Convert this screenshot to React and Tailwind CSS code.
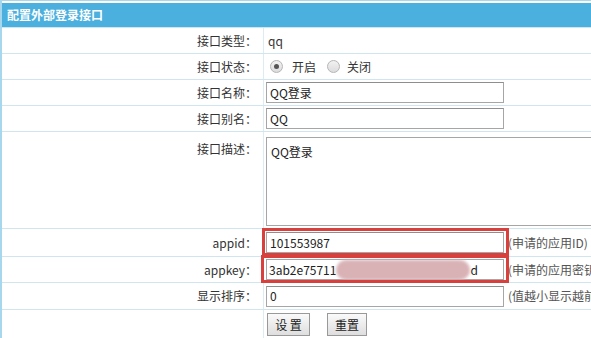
import React from "react";

const font = { fontFamily: '"Noto Sans CJK SC", "Noto Sans", sans-serif' };

function Row({ label, children, h = "h-[26px]", top = false }) {
  return (
    <div className={`flex border-b border-[#cfe5ef] ${h}`}>
      <div
        className={`w-[262px] shrink-0 border-r border-[#dcecf3] pr-[6px] text-right text-[12px] text-[#333] ${
          top ? "pt-[8px]" : "flex items-center justify-end"
        }`}
      >
        {label}
      </div>
      <div className="flex flex-1 items-center pl-[2px] text-[12px] text-[#333]">{children}</div>
    </div>
  );
}

function Input({ value, w = "w-[238px]" }) {
  return (
    <div
      className={`${w} h-[21px] border border-[#a6a6a6] border-t-[#8e8e8e] bg-white pl-[3px] flex items-center text-[12px] text-[#222]`}
    >
      {value}
    </div>
  );
}

function Radio({ checked }) {
  return (
    <span className="inline-flex h-[13px] w-[13px] items-center justify-center rounded-full border border-[#b5b5b5] bg-gradient-to-b from-[#f2f2f2] to-[#dcdcdc]">
      {checked && <span className="h-[5px] w-[5px] rounded-full bg-[#555]" />}
    </span>
  );
}

export default function App() {
  return (
    <div className="h-[338px] w-[591px] overflow-hidden bg-white" style={font}>
      <div className="w-[720px] border-l-2 border-t border-[#a6d7ec] pt-[2px]">
        <div className="flex h-[25px] items-center bg-[#4cb0de] pl-[5px] text-[12px] font-bold text-white border-b border-[#cfe5ef]">
          配置外部登录接口
        </div>
        <Row label="接口类型：">
          <span className="pl-[2px]">qq</span>
        </Row>
        <Row label="接口状态：">
          <span className="ml-[4px] flex items-center gap-[9px]">
            <Radio checked />
            <span>开启</span>
          </span>
          <span className="ml-[11px] flex items-center gap-[7px]">
            <Radio />
            <span>关闭</span>
          </span>
        </Row>
        <Row label="接口名称：">
          <Input value="QQ登录" />
        </Row>
        <Row label="接口别名：">
          <Input value="QQ" />
        </Row>
        <Row label="接口描述：" h="h-[97px]" top>
          <div className="h-full w-full pt-[5px]">
            <div className="h-[89px] w-[400px] border border-[#a6a6a6] bg-white pl-[4px] pt-[5px] text-[12px] text-[#222]">
              QQ登录
            </div>
          </div>
        </Row>
        <Row label="appid：" h="h-[28px]">
          <div className="relative flex items-center">
            <Input value="101553987" />
            <div className="absolute left-[-4px] top-[-4px] h-[28px] w-[247px] border-[3px] border-[#d8403e]" />
            <span className="ml-[4px] text-[#555]">(申请的应用ID)</span>
          </div>
        </Row>
        <Row label="appkey：" h="h-[26px]">
          <div className="relative flex items-center">
            <div className="flex h-[21px] w-[238px] items-center border border-[#a6a6a6] bg-white pl-[2px] text-[12px] text-[#222]">
              <span>3ab2e75711</span>
              <span className="h-[20px] w-[134px] rounded-full bg-[#d9b2b6] blur-[1.5px]" />
              <span>d</span>
            </div>
            <div className="absolute left-[-5px] top-[-4px] h-[28px] w-[248px] border-[3px] border-[#d8403e]" />
            <span className="ml-[4px] text-[#555]">(申请的应用密钥)</span>
          </div>
        </Row>
        <Row label="显示排序：" h="h-[27px]">
          <Input value="0" />
          <span className="ml-[4px] text-[#555]">(值越小显示越前)</span>
        </Row>
        <div className="flex h-[40px]">
          <div className="w-[262px] shrink-0 border-r border-[#dcecf3]" />
          <div className="flex items-start gap-[17px] pl-[3px] pt-[3px]">
            <button className="h-[23px] w-[43px] border border-[#999] bg-gradient-to-b from-[#fafafa] to-[#dedede] text-[12px] text-[#222]">
              设 置
            </button>
            <button className="h-[23px] w-[40px] border border-[#999] bg-gradient-to-b from-[#fafafa] to-[#dedede] text-[12px] text-[#222]">
              重置
            </button>
          </div>
        </div>
      </div>
    </div>
  );
}
